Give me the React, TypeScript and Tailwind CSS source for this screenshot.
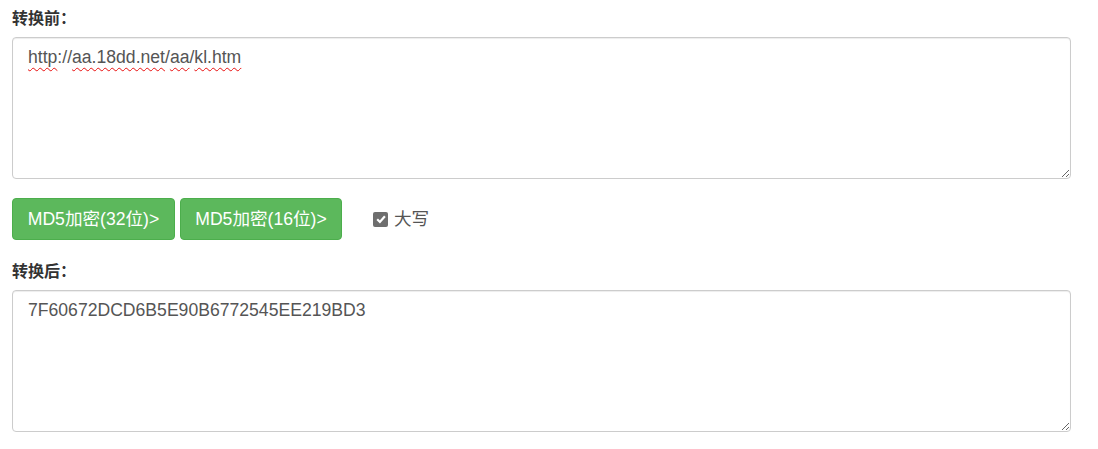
import React from "react";

const Squig = ({ children }: { children: React.ReactNode }) => (
  <span className="underline decoration-wavy decoration-[#e81010] decoration-[1px] underline-offset-[4px] [text-decoration-skip-ink:none]">
    {children}
  </span>
);

export default function App() {
  return (
    <div className="w-[1098px] h-[449px] bg-white pl-[12px] pt-[6px] font-['Liberation_Sans','Noto_Sans_CJK_SC',sans-serif] overflow-hidden">
      <div className="h-[22px] leading-[22px] text-[16px] font-bold text-[#333] font-['Noto_Sans_CJK_SC','Liberation_Sans',sans-serif]">
        转换前：
      </div>
      <div className="mt-[9px] w-[1059px] h-[142px] border border-[#ccc] rounded-[4px] pl-[15px] pr-[14px] pt-[7px] text-[17.6px] leading-[25px] text-[#555] overflow-auto resize shadow-[inset_0_1px_1px_rgba(0,0,0,0.075)]">
        <Squig>http</Squig>://<Squig>aa.18dd.net</Squig>/<Squig>aa</Squig>/<Squig>kl.htm</Squig>
      </div>
      <div className="mt-[19px] h-[42px] flex items-center">
        <button className="w-[163px] h-[42px] bg-[#5cb85c] border border-[#4cae4c] rounded-[4px] text-white text-[17.6px] leading-[25px] flex items-center justify-center">
          MD5加密(32位)&gt;
        </button>
        <button className="ml-[5px] w-[162px] h-[42px] bg-[#5cb85c] border border-[#4cae4c] rounded-[4px] text-white text-[17.6px] leading-[25px] flex items-center justify-center">
          MD5加密(16位)&gt;
        </button>
        <span className="ml-[31px] w-[15px] h-[15px] rounded-[2px] bg-[#6e6e6e] flex items-center justify-center">
          <svg width="12" height="12" viewBox="0 0 12 12">
            <path d="M2.2 6.3 L4.9 9 L9.9 3.2" fill="none" stroke="#fff" strokeWidth="2.2" />
          </svg>
        </span>
        <span className="ml-[6px] text-[17.6px] text-[#555] leading-[25px]">大写</span>
      </div>
      <div className="mt-[19px] h-[22px] leading-[22px] text-[16px] font-bold text-[#333] font-['Noto_Sans_CJK_SC','Liberation_Sans',sans-serif]">
        转换后：
      </div>
      <textarea
        readOnly
        spellCheck={false}
        defaultValue="7F60672DCD6B5E90B6772545EE219BD3"
        className="block mt-[9px] w-[1059px] h-[142px] border border-[#ccc] rounded-[4px] pl-[15px] pr-[14px] pt-[7px] text-[17.6px] leading-[25px] text-[#555] outline-none shadow-[inset_0_1px_1px_rgba(0,0,0,0.075)]"
      />
    </div>
  );
}
